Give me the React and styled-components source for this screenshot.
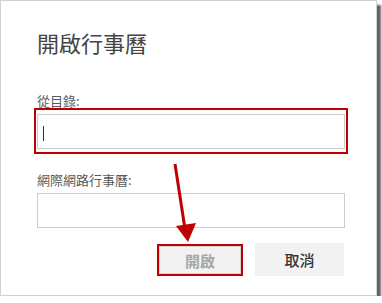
import React from "react";
import styled, { createGlobalStyle } from "styled-components";

const GlobalStyle = createGlobalStyle`
	html, body {
		margin: 0;
		padding: 0;
		background: #ffffff;
	}

	body {
		font-family: "Noto Sans CJK TC", "Noto Sans", sans-serif;
	}
`;

function App() {
	return (
		<>
			<GlobalStyle />
			<Frame>
				<Title>開啟行事曆</Title>

				<Label>從目錄:</Label>
				<Highlight>
					<Field>
						<Caret />
					</Field>
				</Highlight>

				<Label $gap={19}>網際網路行事曆:</Label>
				<Field $offset={6} />

				<Actions>
					<ButtonHighlight>
						<Button $disabled>開啟</Button>
					</ButtonHighlight>
					<Button>取消</Button>
				</Actions>

				{/* annotation arrow drawn over the dialog */}
				<Arrow width="382" height="303" viewBox="0 0 382 303">
					<line x1="175" y1="164" x2="185" y2="229" stroke="#c00000" strokeWidth="3" />
					<polygon points="176,226 196,223 188,242" fill="#c00000" />
				</Arrow>
			</Frame>
		</>
	);
}

export default App;

const Frame = styled.div`
	position: relative;
	box-sizing: border-box;
	width: 377px;
	height: 296px;
	padding: 26px 0 0 36px;
	background: #ffffff;
	border: 1px solid #d2d2d2;
	box-shadow: 4px 5px 2px rgba(0, 0, 0, 0.62);
	display: flex;
	flex-direction: column;
	align-items: flex-start;
`;

const Title = styled.h1`
	margin: 0;
	font-size: 22px;
	line-height: 30px;
	font-weight: 400;
	color: #444444;
`;

const Label = styled.div`
	margin-top: ${(p) => p.$gap ?? 37}px;
	font-size: 13px;
	line-height: 14px;
	color: #5a5a5a;
`;

const Highlight = styled.div`
	margin-left: -3px;
	padding: 4px 1px 3px 1px;
	border: 2px solid #c00000;
`;

const Field = styled.div`
	box-sizing: border-box;
	width: 308px;
	height: 35px;
	margin-top: ${(p) => p.$offset ?? 0}px;
	padding-left: 5px;
	border: 1px solid #cccccc;
	background: #ffffff;
	display: flex;
	align-items: center;
`;

const Caret = styled.span`
	width: 1px;
	height: 15px;
	margin-top: 3px;
	background: #333333;
`;

const Actions = styled.div`
	align-self: stretch;
	margin-top: 16px;
	padding-right: 32px;
	display: flex;
	justify-content: flex-end;
	align-items: flex-start;
	gap: 12px;
`;

const ButtonHighlight = styled.div`
	border: 2px solid #c00000;
	display: flex;
`;

const Button = styled.div`
	box-sizing: border-box;
	width: ${(p) => (p.$disabled ? 82 : 89)}px;
	height: ${(p) => (p.$disabled ? 28 : 33)}px;
	border: 1px solid ${(p) => (p.$disabled ? "#d4d4d4" : "#f2f2f2")};
	background: #f2f2f2;
	color: ${(p) => (p.$disabled ? "#a8a8a8" : "#333333")};
	font-size: 15px;
	font-weight: ${(p) => (p.$disabled ? 700 : 500)};
	display: flex;
	align-items: center;
	justify-content: center;
	margin-top: ${(p) => (p.$disabled ? 0 : -1)}px;
`;

const Arrow = styled.svg`
	position: absolute;
	left: -1px;
	top: -1px;
	pointer-events: none;
`;
